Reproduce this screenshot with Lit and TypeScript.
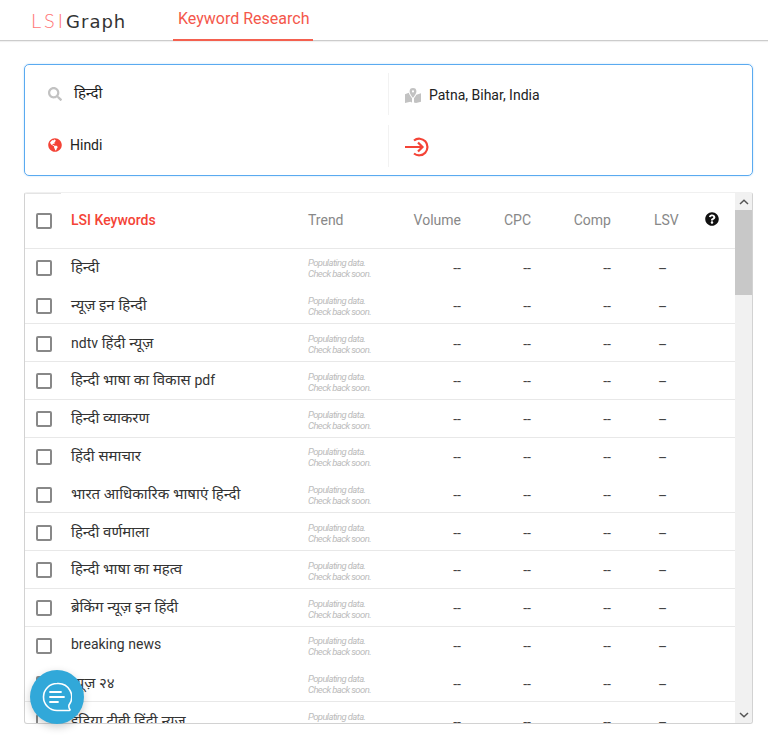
import { LitElement, html, css, svg } from "lit";
import { customElement } from "lit/decorators.js";

const KEYWORDS = [
  "हिन्दी",
  "न्यूज़ इन हिन्दी",
  "ndtv हिंदी न्यूज़",
  "हिन्दी भाषा का विकास pdf",
  "हिन्दी व्याकरण",
  "हिंदी समाचार",
  "भारत आधिकारिक भाषाएं हिन्दी",
  "हिन्दी वर्णमाला",
  "हिन्दी भाषा का महत्व",
  "ब्रेकिंग न्यूज़ इन हिंदी",
  "breaking news",
  "न्यूज़ २४",
  "इंडिया टीवी हिंदी न्यूज़",
];

// Row indices whose separator disappears at fractional row heights in the reference.
const NO_LINE = new Set([0, 5, 10]);

const searchIcon = svg`<path fill="currentColor" d="M505 442.7L405.3 343c-4.5-4.5-10.6-7-17-7H372c27.6-35.3 44-79.7 44-128C416 93.1 322.9 0 208 0S0 93.1 0 208s93.1 208 208 208c48.3 0 92.7-16.4 128-44v16.3c0 6.4 2.5 12.5 7 17l99.7 99.7c9.4 9.4 24.6 9.4 33.9 0l28.3-28.3c9.4-9.4 9.4-24.6.1-34zM208 336c-70.7 0-128-57.2-128-128 0-70.7 57.2-128 128-128 70.7 0 128 57.2 128 128 0 70.7-57.2 128-128 128z"/>`;
const globeIcon = svg`<path fill="currentColor" d="M248 8C111.03 8 0 119.03 0 256s111.03 248 248 248 248-111.03 248-248S384.97 8 248 8zm82.29 357.6c-3.9 3.88-7.99 7.95-11.31 11.28-2.99 3-5.1 6.7-6.17 10.71-1.51 5.66-2.73 11.38-4.77 16.87l-17.39 46.85c-13.76 3-28 4.69-42.65 4.69v-27.38c1.69-12.62-7.64-36.26-22.63-51.25-6-6-9.37-14.14-9.37-22.63v-32.01c0-11.64-6.27-22.34-16.46-27.97-14.37-7.95-34.81-19.06-48.81-26.11-11.48-5.78-22.1-13.14-31.65-21.75l-.8-.72a114.792 114.792 0 0 1-18.06-20.74c-9.38-13.77-24.66-36.42-34.59-51.14 20.47-45.5 57.36-82.04 103.2-101.89l24.01 12.01C203.48 89.74 216 82.01 216 70.11v-11.3c7.99-1.29 16.12-2.11 24.39-2.42l28.3 28.3c6.25 6.25 6.25 16.38 0 22.63L264 112l-10.34 10.34c-3.12 3.12-3.12 8.19 0 11.31l4.69 4.69c3.12 3.12 3.12 8.19 0 11.31l-8 8a8.008 8.008 0 0 1-5.66 2.34h-8.99c-2.08 0-4.08.81-5.58 2.27l-9.92 9.65a8.008 8.008 0 0 0-1.58 9.31l15.59 31.19c2.66 5.32-1.21 11.58-7.15 11.58h-5.64c-1.93 0-3.79-.7-5.24-1.96l-9.28-8.06a16.017 16.017 0 0 0-15.55-3.1l-31.17 10.39a11.95 11.95 0 0 0-8.17 11.34c0 4.53 2.56 8.66 6.61 10.69l11.08 5.54c9.41 4.71 19.79 7.16 30.31 7.16s22.59 27.29 32 32h66.75c8.49 0 16.62 3.37 22.63 9.37l13.69 13.69a30.503 30.503 0 0 1 8.93 21.57 46.536 46.536 0 0 1-13.72 32.98z"/>`;
const helpIcon = svg`<path fill="currentColor" d="M504 256c0 136.997-111.043 248-248 248S8 392.997 8 256C8 119.083 119.043 8 256 8s248 111.083 248 248zM262.655 90c-54.497 0-89.255 22.957-116.549 63.758-3.536 5.286-2.353 12.415 2.715 16.258l34.699 26.31c5.205 3.947 12.621 3.008 16.665-2.122 17.864-22.658 30.113-35.797 57.303-35.797 20.429 0 45.698 13.148 45.698 32.958 0 14.976-12.363 22.667-32.534 33.976C247.128 238.528 216 254.941 216 296v4c0 6.627 5.373 12 12 12h56c6.627 0 12-5.373 12-12v-1.333c0-28.462 83.186-29.647 83.186-106.667 0-58.002-60.165-102-116.531-102zM256 338c-25.365 0-46 20.635-46 46 0 25.364 20.635 46 46 46s46-20.636 46-46c0-25.365-20.635-46-46-46z"/>`;

/** Latin runs are set a size smaller than the Devanagari around them. */
function keyword(text: string) {
  return text
    .split(/([A-Za-z]+)/)
    .map((part) => (/^[A-Za-z]+$/.test(part) ? html`<span class="latin">${part}</span>` : part));
}

@customElement("app-root")
export class AppRoot extends LitElement {
  static styles = css`
    :host {
      display: block;
      position: relative;
      height: 739px;
      overflow: hidden;
      background: #fff;
      font-family: Roboto, "Noto Sans", sans-serif;
      color: #333;
    }
    .topbar {
      display: flex;
      height: 40px;
      border-bottom: 1px solid #ccc;
      box-shadow: 0 1px 1px rgba(0, 0, 0, 0.06);
      padding-left: 31px;
    }
    .logo {
      width: 142px;
      font-family: "DejaVu Sans", sans-serif;
      font-size: 18px;
      line-height: 41px;
      color: #333;
      white-space: nowrap;
      letter-spacing: 1px;
    }
    .logo span {
      color: #f77;
      font-family: Lato, sans-serif;
      font-weight: 300;
      letter-spacing: 3px;
      font-size: 20px;
    }
    .tab {
      width: 130px;
      height: 39px;
      padding: 0 5px;
      margin-bottom: -1px;
      line-height: 37px;
      font-size: 16px;
      color: #f4574b;
      border-bottom: 2px solid #f4604f;
      white-space: nowrap;
    }
    .search {
      margin: 23px 15px 0 24px;
      height: 112px;
      box-sizing: border-box;
      border: 1.5px solid #5aaaf0;
      border-radius: 5px;
      display: grid;
      grid-template-columns: 363px 1fr;
      grid-template-rows: 1fr 1fr;
      box-shadow: 0 0 2px rgba(90, 170, 240, 0.4);
    }
    .cell {
      display: flex;
      align-items: center;
      font-size: 14px;
      color: #222;
      padding-left: 23px;
      gap: 8px;
    }
    .cell.a {
      padding-top: 3px;
    }
    .cell.b {
      padding-bottom: 6px;
    }
    .cell.right {
      border-left: 1px solid #f2f2f2;
      padding: 0 0 0 16px;
    }
    .cell.right.a {
      margin: 8px 0 5px;
      padding-top: 2px;
    }
    .cell.right.b {
      margin: 5px 0 8px;
      padding-top: 1px;
    }
    .kw-input {
      font-size: 15px;
      margin-left: 4px;
      margin-top: -4px;
    }
    .cell svg {
      display: block;
      flex: none;
    }
    .grey {
      color: #c2c2c2;
    }
    .red {
      color: #f44336;
    }
    .table {
      position: relative;
      margin: 16px 15px 0 24px;
      height: 532px;
      box-sizing: border-box;
      border: 1px solid #d2d2d2;
      border-top-color: #f0f0f0;
      border-radius: 3px;
      display: flex;
      overflow: hidden;
    }
    .corner {
      position: absolute;
      left: 0;
      top: 0;
      width: 36px;
      height: 1px;
      background: #e4e4e4;
    }
    .list {
      flex: 1;
      min-width: 0;
    }
    .row {
      display: grid;
      grid-template-columns: 46px 237px 105px 48px 70px 80px 43px 51px 1fr;
      align-items: center;
      height: 37.8px;
      box-sizing: border-box;
      border-bottom: 1px solid #e8e8e8;
      font-size: 14px;
    }
    .row.noline {
      border-bottom-color: transparent;
    }
    .row.head {
      height: 55.6px;
      color: #888;
    }
    .box {
      width: 16px;
      height: 16px;
      box-sizing: border-box;
      border: 2px solid #888;
      border-radius: 2px;
      margin-left: 11px;
      margin-top: 2px;
      background: #fff;
    }
    .head .label {
      margin-top: 0;
    }
    .head .lsi {
      color: #f44336;
      font-weight: 500;
      margin-top: 0;
    }
    .num {
      text-align: right;
    }
    .kw {
      font-size: 15px;
      color: #333;
      white-space: nowrap;
      margin-top: -2px;
    }
    .latin {
      font-size: 14px;
    }
    .trend {
      font-size: 9.5px;
      letter-spacing: -0.6px;
      line-height: 11px;
      font-style: italic;
      color: #bbb;
      white-space: nowrap;
      margin-top: 3px;
    }
    .dash {
      color: #444;
      text-align: right;
      margin-top: 2px;
    }
    .lsv {
      color: #444;
      padding-left: 4px;
      margin-top: 4px;
    }
    .help {
      display: block;
      color: #111;
      margin-top: -2px;
    }
    .scroll {
      width: 17px;
      flex: none;
      background: #f1f1f1;
      display: flex;
      flex-direction: column;
    }
    .scroll .btn {
      height: 17px;
      display: flex;
      align-items: center;
      justify-content: center;
      color: #555;
      flex: none;
    }
    .scroll .thumb {
      height: 85px;
      background: #c8c8c8;
      flex: none;
    }
    .scroll .track {
      flex: 1;
    }
    .chat {
      position: absolute;
      left: 30px;
      top: 670px;
      width: 54px;
      height: 54px;
      border-radius: 50%;
      background: #31a8d9;
      box-shadow: 0 3px 8px rgba(0, 0, 0, 0.2);
      display: flex;
      align-items: center;
      justify-content: center;
    }
  `;

  render() {
    return html`
      <div class="topbar">
        <div class="logo"><span>LSI</span>Graph</div>
        <div class="tab">Keyword Research</div>
      </div>

      <div class="search">
        <div class="cell a">
          <svg class="grey" width="14" height="14" viewBox="0 0 512 512">${searchIcon}</svg>
          <span class="kw-input">हिन्दी</span>
        </div>
        <div class="cell right a">
          <svg class="grey" width="16" height="15" viewBox="0 0 16 15">
            <path
              fill="currentColor"
              d="M8 0a3.4 3.4 0 0 1 3.4 3.4C11.4 5.3 9 8.6 8 9.8 7 8.6 4.6 5.3 4.6 3.4A3.4 3.4 0 0 1 8 0zm0 2.3a1.1 1.1 0 1 0 0 2.2 1.1 1.1 0 0 0 0-2.2zM0 6.2l3.8-1.4c.5 1.8 2 3.9 3.2 5.4v4.3L5.3 13.7 0 15zM9 10.2c.9-1.1 1.7-2.2 2.4-3.4L16 5.3V13.8L11 15 9 14.5z"
            />
          </svg>
          <span>Patna, Bihar, India</span>
        </div>
        <div class="cell b">
          <svg class="red" width="14" height="14" viewBox="0 0 496 512">${globeIcon}</svg>
          <span>Hindi</span>
        </div>
        <div class="cell right b">
          <svg class="red" width="25" height="20" viewBox="0 0 25 20" fill="none" stroke="currentColor" stroke-width="2.2">
            <path d="M9 3.5A8.3 8.3 0 1 1 9 16.5" />
            <path d="M0 10H17.5M13 5.5 17.5 10 13 14.5" />
          </svg>
        </div>
      </div>

      <div class="table">
        <div class="corner"></div>
        <div class="list">
          <div class="row head">
            <div class="box"></div>
            <div class="lsi">LSI Keywords</div>
            <div class="label">Trend</div>
            <div class="label num">Volume</div>
            <div class="label num">CPC</div>
            <div class="label num">Comp</div>
            <div></div>
            <div class="label">LSV</div>
            <svg class="help" width="14" height="14" viewBox="0 0 512 512">${helpIcon}</svg>
          </div>
          ${KEYWORDS.map(
            (k, i) => html`
              <div class="row ${NO_LINE.has(i) ? "noline" : ""}">
                <div class="box"></div>
                <div class="kw">${keyword(k)}</div>
                <div class="trend">Populating data.<br />Check back soon.</div>
                <div class="dash">--</div>
                <div class="dash">--</div>
                <div class="dash">--</div>
                <div></div>
                <div class="lsv">–</div>
                <div></div>
              </div>
            `
          )}
        </div>
        <div class="scroll">
          <div class="btn">
            <svg width="10" height="6" viewBox="0 0 10 6" fill="none" stroke="currentColor" stroke-width="1.5"><path d="M1 5 5 1.2 9 5" /></svg>
          </div>
          <div class="thumb"></div>
          <div class="track"></div>
          <div class="btn">
            <svg width="10" height="6" viewBox="0 0 10 6" fill="none" stroke="currentColor" stroke-width="1.5"><path d="M1 1 5 4.8 9 1" /></svg>
          </div>
        </div>
      </div>

      <div class="chat">
        <svg width="30" height="30" viewBox="0 0 30 30" fill="none" stroke="#fff" stroke-width="1.6" stroke-linecap="round">
          <path d="M15 1.5A13.5 13.5 0 1 0 15 28.5H27.3C28 28.5 28.3 27.8 27.8 27.2 27 26.3 26.7 24.5 27 23A13.5 13.5 0 0 0 15 1.5Z" />
          <path d="M8 10H19M8 15H22M8 20H16" stroke-width="1.8" />
        </svg>
      </div>
    `;
  }
}
